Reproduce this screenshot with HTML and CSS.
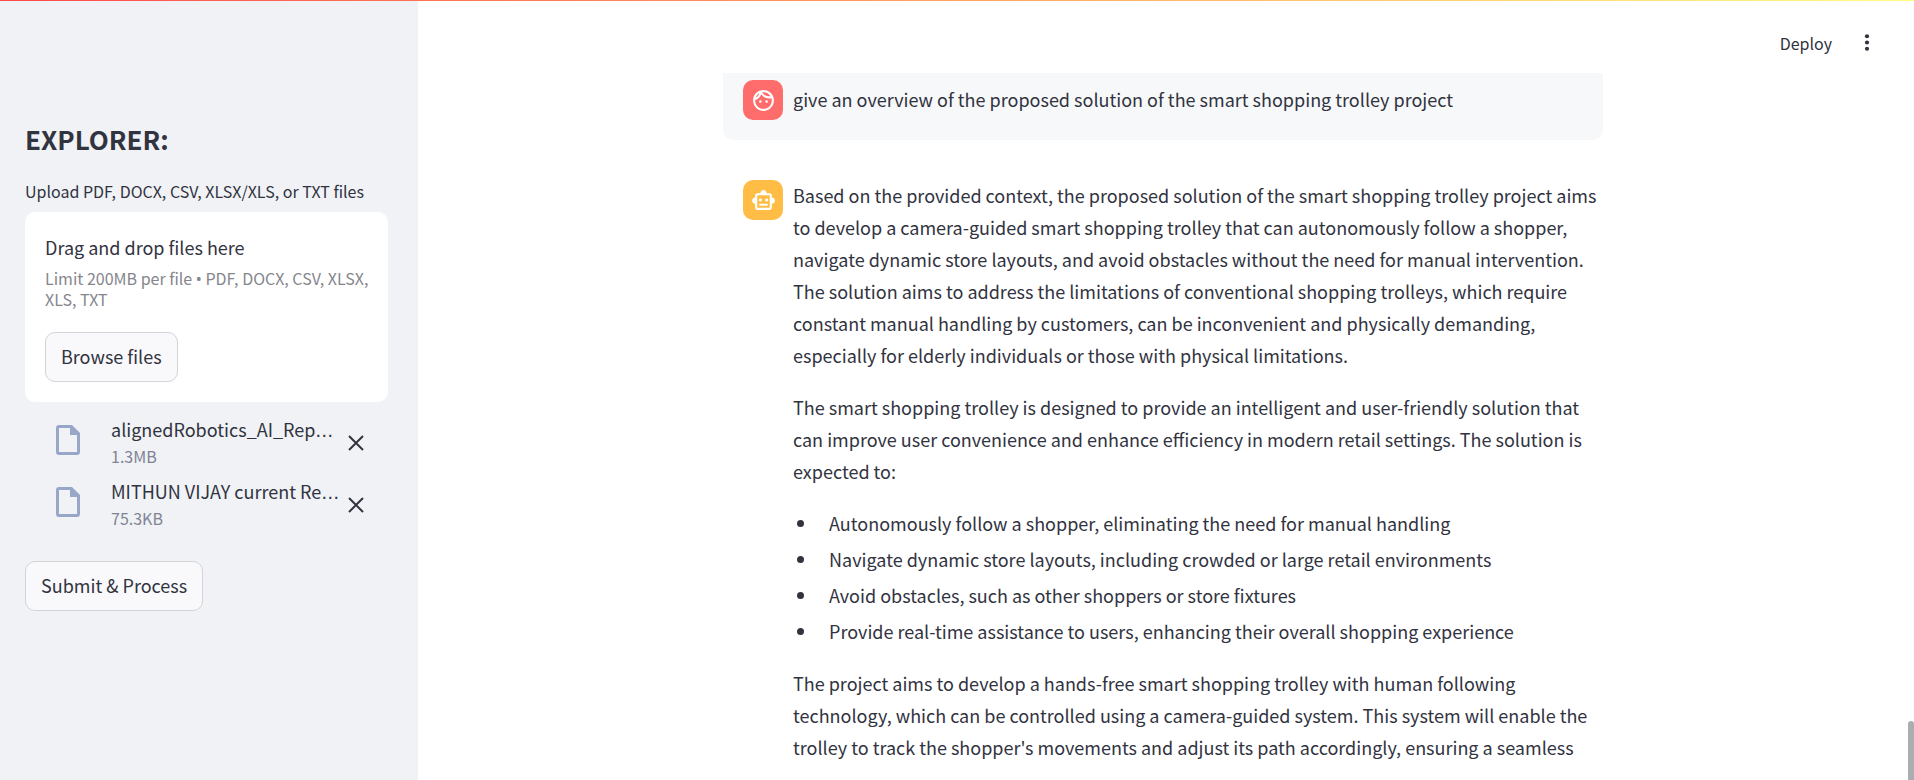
FILE: index.html
```html
<!DOCTYPE html>
<html lang="en">
<head>
<meta charset="utf-8">
<title>Document chat</title>
<link rel="stylesheet" href="styles.css">
</head>
<body>
<div class="app">
  <div class="decoration"></div>
  <aside class="sidebar">
    <h2 class="sidebar-title">EXPLORER:</h2>
    <label class="upload-label" for="browse">Upload PDF, DOCX, CSV, XLSX/XLS, or TXT files</label>
    <section class="dropzone">
      <div class="drop-title">Drag and drop files here</div>
      <div class="drop-hint">Limit 200MB per file <span class="symbol">•</span> PDF, DOCX, CSV, XLSX, XLS, TXT</div>
      <button class="button" id="browse" type="button">Browse files</button>
    </section>
    <ul class="files">
      <li class="file">
        <svg class="file-icon" viewBox="0 0 24 30" aria-hidden="true"><path fill-rule="evenodd" d="M3 0H16L24 8V27A3 3 0 0 1 21 30H3A3 3 0 0 1 0 27V3A3 3 0 0 1 3 0ZM3 3V27H21V10H14V3Z"/></svg>
        <div class="file-text">
          <div class="file-name">alignedRobotics_AI_Rep<span class="ellipsis">…</span></div>
          <div class="file-size">1.3MB</div>
        </div>
        <button class="remove" type="button" aria-label="Remove alignedRobotics file"><svg viewBox="0 0 16 16" aria-hidden="true"><path d="M1 1L15 15M15 1L1 15"/></svg></button>
      </li>
      <li class="file">
        <svg class="file-icon" viewBox="0 0 24 30" aria-hidden="true"><path fill-rule="evenodd" d="M3 0H16L24 8V27A3 3 0 0 1 21 30H3A3 3 0 0 1 0 27V3A3 3 0 0 1 3 0ZM3 3V27H21V10H14V3Z"/></svg>
        <div class="file-text">
          <div class="file-name">MITHUN VIJAY current Re<span class="ellipsis">…</span></div>
          <div class="file-size">75.3KB</div>
        </div>
        <button class="remove" type="button" aria-label="Remove MITHUN VIJAY file"><svg viewBox="0 0 16 16" aria-hidden="true"><path d="M1 1L15 15M15 1L1 15"/></svg></button>
      </li>
    </ul>
    <button class="button" type="button">Submit &amp; Process</button>
  </aside>
  <main class="main">
    <header class="toolbar">
      <button class="deploy" type="button">Deploy</button>
      <button class="menu" type="button" aria-label="Main menu"><svg viewBox="0 0 24 24" aria-hidden="true"><circle cx="12" cy="6" r="2"/><circle cx="12" cy="12" r="2"/><circle cx="12" cy="18" r="2"/></svg></button>
    </header>
    <div class="chat">
      <article class="message message-user">
        <div class="avatar avatar-user">
          <svg viewBox="0 0 24 24" aria-hidden="true"><path d="M10.25 13a1.25 1.25 0 1 1-2.5 0 1.25 1.25 0 0 1 2.5 0zM15 11.75a1.25 1.25 0 1 0 0 2.5 1.25 1.25 0 0 0 0-2.5zM22 12c0 5.52-4.48 10-10 10S2 17.52 2 12 6.48 2 12 2s10 4.48 10 10zM10.66 4.12C12.06 6.44 14.6 8 17.5 8c.46 0 .91-.05 1.34-.12C17.44 5.56 14.9 4 12 4c-.46 0-.91.05-1.34.12zM4.42 9.47c1.71-.97 3.03-2.55 3.66-4.44-1.71.97-3.03 2.55-3.66 4.44zM20 12c0-.78-.12-1.53-.33-2.24-.7.15-1.42.24-2.17.24-3.13 0-5.92-1.44-7.76-3.69C8.69 8.87 6.6 10.88 4 11.86c.01.04 0 .09 0 .14 0 4.41 3.59 8 8 8s8-3.59 8-8z"/></svg>
        </div>
        <div class="message-body"><p>give an overview of the proposed solution of the smart shopping trolley project</p></div>
      </article>
      <article class="message">
        <div class="avatar avatar-bot">
          <svg viewBox="0 0 24 24" aria-hidden="true"><path d="M20 9V7c0-1.1-.9-2-2-2h-3c0-1.66-1.34-3-3-3S9 3.34 9 5H6c-1.1 0-2 .9-2 2v2c-1.66 0-3 1.34-3 3s1.34 3 3 3v4c0 1.1.9 2 2 2h12c1.1 0 2-.9 2-2v-4c1.66 0 3-1.34 3-3s-1.34-3-3-3zm-2 10H6V7h12v12zm-9-6c-.83 0-1.500-.67-1.500-1.500S8.170 10 9 10s1.500.67 1.500 1.500S9.830 13 9 13zm7.500-1.500c0 .83-.67 1.500-1.500 1.500s-1.500-.67-1.500-1.500.67-1.500 1.500-1.500 1.500.67 1.500 1.500zM8 15h8v2H8v-2z"/></svg>
        </div>
        <div class="message-body">
          <p>Based on the provided context, the proposed solution of the smart shopping trolley project aims to develop a camera-guided smart shopping trolley that can autonomously follow a shopper, navigate dynamic store layouts, and avoid obstacles without the need for manual intervention. The solution aims to address the limitations of conventional shopping trolleys, which require constant manual handling by customers, can be inconvenient and physically demanding, especially for elderly individuals or those with physical limitations.</p>
          <p>The smart shopping trolley is designed to provide an intelligent and user-friendly solution that can improve user convenience and enhance efficiency in modern retail settings. The solution is expected to:</p>
          <ul class="points">
            <li>Autonomously follow a shopper, eliminating the need for manual handling</li>
            <li>Navigate dynamic store layouts, including crowded or large retail environments</li>
            <li>Avoid obstacles, such as other shoppers or store fixtures</li>
            <li>Provide real-time assistance to users, enhancing their overall shopping experience</li>
          </ul>
          <p>The project aims to develop a hands-free smart shopping trolley with human following technology, which can be controlled using a camera-guided system. This system will enable the trolley to track the shopper's movements and adjust its path accordingly, ensuring a seamless</p>
        </div>
      </article>
    </div>
    <div class="scroll-thumb"></div>
  </main>
</div>
</body>
</html>
```
FILE: styles.css
```css
* { box-sizing: border-box; }

body {
  margin: 0;
  background: #fff;
  color: #31333f;
  font-family: "Noto Sans CJK SC", "Noto Sans", sans-serif;
  font-size: 18px;
  line-height: 32px;
}

button {
  font: inherit;
  color: inherit;
  cursor: pointer;
}

ul { margin: 0; padding: 0; list-style: none; }

.app {
  position: relative;
  display: flex;
  height: 100vh;
  overflow: hidden;
}

.decoration {
  position: absolute;
  top: 0;
  left: 0;
  right: 0;
  height: 1px;
  background: linear-gradient(90deg, #ff4b4b, #fffd80);
  z-index: 2;
}

.sidebar {
  flex: none;
  width: 418px;
  padding: 119px 30px 0 25px;
  background: #f0f2f6;
}

.sidebar-title {
  margin: 0 0 22px;
  font-size: 26px;
  font-weight: 600;
  line-height: 40px;
}

.upload-label {
  display: block;
  margin-bottom: 11px;
  font-size: 16px;
  line-height: 20px;
}

.dropzone {
  padding: 19px 15px 20px 20px;
  background: #fff;
  border-radius: 10px;
}

.drop-hint {
  margin: 5px 0 22px;
  color: #85868d;
  font-size: 16px;
  line-height: 21px;
}

.symbol {
  font-family: "Noto Sans", sans-serif;
  line-height: 1;
}

.ellipsis {
  font-family: "DejaVu Sans", sans-serif;
  line-height: 1;
}

.button {
  display: block;
  height: 50px;
  padding: 0 15px 2px;
  background: #f9f9fb;
  border: 1px solid #d3d4d9;
  border-radius: 10px;
}

.files { padding: 14px 20px 29px 31px; }

.file {
  display: flex;
  align-items: center;
  height: 54px;
}

.file + .file { margin-top: 8px; }

.file-icon {
  flex: none;
  width: 24px;
  height: 30px;
  margin: 0 31px 6px 0;
  fill: #98a6c7;
}

.file-text {
  flex: 1;
  min-width: 0;
  white-space: nowrap;
}

.file-name { line-height: 26px; }

.file-size {
  color: #808495;
  font-size: 16px;
  line-height: 28px;
}

.remove {
  display: flex;
  flex: none;
  padding: 4px;
  background: none;
  border: 0;
}

.remove svg {
  width: 16px;
  height: 16px;
  fill: none;
  stroke: #31333f;
  stroke-width: 2;
}

.main {
  position: relative;
  display: flex;
  flex: 1;
  flex-direction: column;
  min-width: 0;
  padding-right: 6px;
}

.toolbar {
  display: flex;
  flex: none;
  align-items: center;
  justify-content: flex-end;
  gap: 20px;
  height: 73px;
  padding: 12px 26px 0 0;
}

.deploy,
.menu {
  padding: 0;
  background: none;
  border: 0;
}

.deploy { font-size: 16px; }

.menu { display: flex; }

.menu svg {
  width: 30px;
  height: 25px;
  fill: #31333f;
}

.chat {
  width: 100%;
  max-width: 880px;
  margin: 0 auto;
}

.message {
  display: flex;
  gap: 10px;
  padding: 19px 0 20px 20px;
}

.message-user {
  margin-bottom: 20px;
  padding: 6px 20px 20px;
  background: #f7f8fa;
  border-radius: 0 0 10px 10px;
}

.message-user .message-body { padding-top: 4px; }

.avatar {
  display: flex;
  flex: none;
  align-items: center;
  justify-content: center;
  width: 40px;
  height: 40px;
  margin-top: 1px;
  border-radius: 10px;
  color: #fff;
}

.avatar svg {
  width: 25px;
  height: 25px;
  fill: currentColor;
}

.avatar-user { background: #ff6c6c; }
.avatar-bot { background: #ffbd45; }

.message-body { flex: 1; min-width: 0; }

.message-body p { margin: 0 0 20px; }
.message-user .message-body p { margin: 0; }

.points {
  display: flex;
  flex-direction: column;
  gap: 4px;
  margin-bottom: 20px;
}

.points li {
  display: flex;
  align-items: center;
}

.points li::before {
  flex: none;
  width: 7px;
  height: 7px;
  margin: 0 25px 0 4px;
  border-radius: 50%;
  background: #31333f;
  content: "";
}

.scroll-thumb {
  position: absolute;
  right: 0;
  bottom: 0;
  width: 6px;
  height: 59px;
  background: #acadb2;
  border-radius: 3px 3px 0 0;
}
```
